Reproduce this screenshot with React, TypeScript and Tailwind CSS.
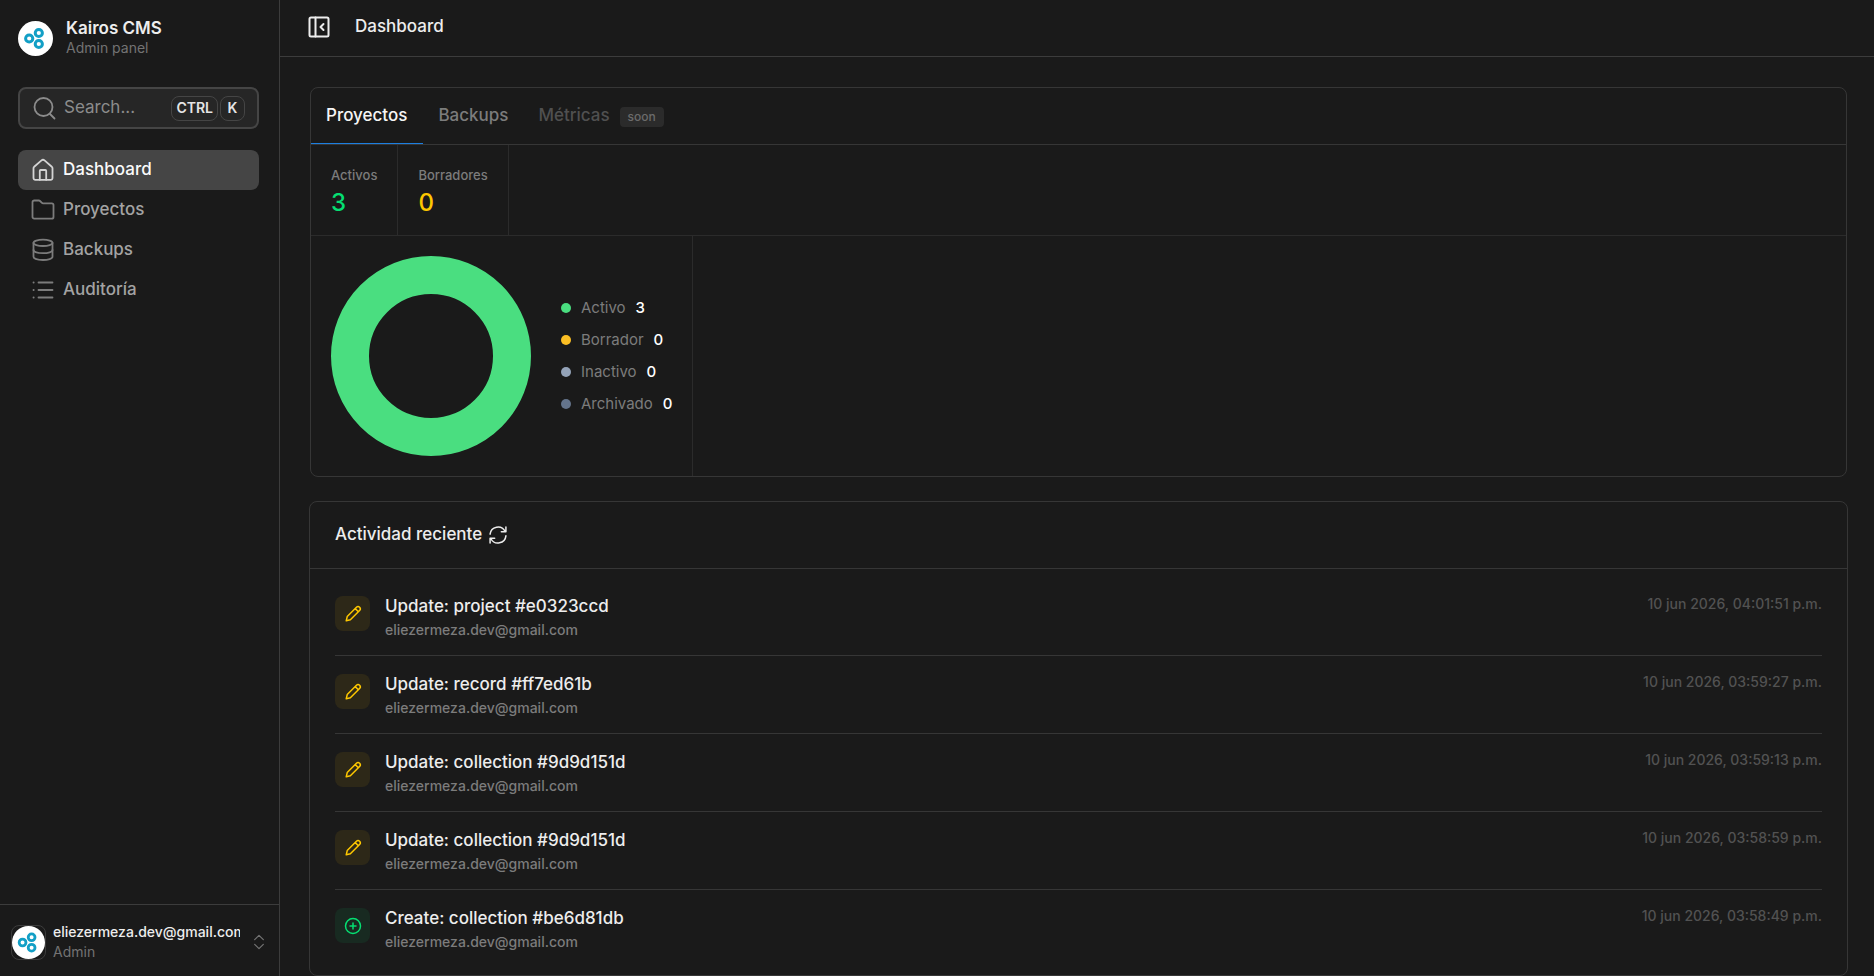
import type { ReactNode } from 'react'
import clsx from 'clsx'

type Activity = {
  kind: 'update' | 'create'
  title: string
  user: string
  date: string
}

const USER = 'eliezermeza.dev@gmail.com'

const activities: Activity[] = [
  { kind: 'update', title: 'Update: project #e0323ccd', user: USER, date: '10 jun 2026, 04:01:51 p.m.' },
  { kind: 'update', title: 'Update: record #ff7ed61b', user: USER, date: '10 jun 2026, 03:59:27 p.m.' },
  { kind: 'update', title: 'Update: collection #9d9d151d', user: USER, date: '10 jun 2026, 03:59:13 p.m.' },
  { kind: 'update', title: 'Update: collection #9d9d151d', user: USER, date: '10 jun 2026, 03:58:59 p.m.' },
  { kind: 'create', title: 'Create: collection #be6d81db', user: USER, date: '10 jun 2026, 03:58:49 p.m.' },
]

const legend = [
  { label: 'Activo', count: 3, dot: 'bg-[#4ade80]' },
  { label: 'Borrador', count: 0, dot: 'bg-[#fbbf24]' },
  { label: 'Inactivo', count: 0, dot: 'bg-[#94a3b8]' },
  { label: 'Archivado', count: 0, dot: 'bg-[#64748b]' },
]

function Icon({ size = 24, stroke = 1.8, children }: { size?: number; stroke?: number; children: ReactNode }) {
  return (
    <svg
      width={size}
      height={size}
      viewBox="0 0 24 24"
      fill="none"
      stroke="currentColor"
      strokeWidth={stroke}
      strokeLinecap="round"
      strokeLinejoin="round"
      className="shrink-0"
      aria-hidden="true"
    >
      {children}
    </svg>
  )
}

const HomeIcon = () => (
  <Icon>
    <path d="M2.500 10.200c0-.6.2-1.100.7-1.500l7.300-6.300a2.300 2.300 0 0 1 3 0l7.300 6.300c.5.4.7.9.7 1.500v9.800a1.800 1.800 0 0 1-1.800 1.800H4.300a1.800 1.800 0 0 1-1.800-1.800z" />
    <path d="M8.800 21.800v-9a.8.8 0 0 1 .8-.8h4.800a.8.8 0 0 1 .8.8v9" />
  </Icon>
)

const FolderIcon = () => (
  <Icon>
    <path d="M1.500 4.200a1.700 1.700 0 0 1 1.700-1.700h4.600c.5 0 .9.200 1.200.5l1.700 1.700c.4.400.9.600 1.400.600h8.700a1.700 1.700 0 0 1 1.700 1.700v12a1.700 1.700 0 0 1-1.700 1.700H3.200a1.700 1.700 0 0 1-1.700-1.700z" />
  </Icon>
)

const DatabaseIcon = () => (
  <Icon>
    <ellipse cx="12" cy="4.800" rx="9.500" ry="3.200" />
    <path d="M2.500 4.800v14c0 1.800 4.300 3.200 9.500 3.200s9.500-1.400 9.500-3.200v-14" />
    <path d="M2.500 12c0 1.800 4.300 3.200 9.500 3.200s9.500-1.400 9.500-3.200" />
  </Icon>
)

const ListIcon = () => (
  <Icon>
    <path d="M7.500 4.500h14M7.500 12h14M7.500 19.500h14M2.500 4.500h.2M2.500 12h.2M2.500 19.500h.2" />
  </Icon>
)

const nav = [
  { label: 'Dashboard', icon: <HomeIcon />, active: true },
  { label: 'Proyectos', icon: <FolderIcon />, active: false },
  { label: 'Backups', icon: <DatabaseIcon />, active: false },
  { label: 'Auditoría', icon: <ListIcon />, active: false },
]

function Logo({ size }: { size: number }) {
  return (
    <svg width={size} height={size} viewBox="0 0 35 35" className="shrink-0" aria-hidden="true">
      <circle cx="17.500" cy="17.500" r="17.500" fill="#fff" />
      <g fill="none" stroke="#129fc6" strokeWidth="3">
        <circle cx="11.200" cy="17.500" r="3.600" />
        <circle cx="20.800" cy="12" r="3.600" />
        <circle cx="20.800" cy="23" r="3.600" />
      </g>
    </svg>
  )
}

function Sidebar() {
  return (
    <aside className="flex w-70 shrink-0 flex-col border-r border-[#3c3c3c]">
      <div className="flex items-center gap-[13px] px-4.5 pt-4.5">
        <Logo size={35} />
        <div>
          <p className="text-[17px] leading-5 font-semibold text-[#ededed]">Kairos CMS</p>
          <p className="text-sm leading-5 text-[#737373]">Admin panel</p>
        </div>
      </div>

      <label className="mr-5 ml-4.5 mt-[29px] flex h-[42px] items-center gap-2 rounded-lg border-2 border-[#454545] bg-[#262626] px-3 text-[#8c8c8c]">
        <Icon>
          <circle cx="11.500" cy="11" r="9" />
          <path d="m18 18 4.500 4.500" />
        </Icon>
        <input
          type="search"
          aria-label="Search"
          placeholder="Search..."
          className="w-full min-w-0 bg-transparent text-[17px] outline-none placeholder:text-[#8c8c8c]"
        />
        <span className="flex gap-0.5 text-sm font-semibold text-[#e5e5e5]">
          <kbd className="flex h-[25px] items-center rounded-lg border border-[#454545] px-1 font-[Inter,sans-serif]">CTRL</kbd>
          <kbd className="flex h-[25px] w-[25px] items-center justify-center rounded-lg border border-[#454545] font-[Inter,sans-serif]">
            K
          </kbd>
        </span>
      </label>

      <nav className="mt-[21px] mr-5 ml-4.5 flex flex-col">
        {nav.map(item => (
          <a
            key={item.label}
            href="#"
            className={clsx(
              'flex h-10 items-center gap-2 rounded-lg px-[13px] text-[17px] font-medium',
              item.active ? 'bg-[#454545] text-[#fafafa]' : 'text-[#a3a3a3]',
            )}
          >
            <span className={item.active ? 'text-[#d4d4d4]' : 'text-[#7c7c7c]'}>{item.icon}</span>
            {item.label}
          </a>
        ))}
      </nav>

      <button
        type="button"
        className="mt-auto flex items-center gap-[7px] border-t border-[#3c3c3c] px-[11px] pt-[17px] pb-3.5 text-left"
      >
        <span className="flex size-[35px] shrink-0 items-center justify-center rounded-lg border border-[#3c3c3c]">
          <Logo size={33} />
        </span>
        <span className="w-[187px] overflow-hidden whitespace-nowrap">
          <span className="block text-sm leading-5 font-medium text-[#ededed]">{USER}</span>
          <span className="block text-sm leading-5 text-[#737373]">Admin</span>
        </span>
        <span className="ml-1 text-[#737373]">
          <Icon size={16}>
            <path d="m5.500 8.500 6.500-6.500 6.500 6.500M5.500 15.500l6.500 6.500 6.500-6.500" />
          </Icon>
        </span>
      </button>
    </aside>
  )
}

function Stat({ label, value, color }: { label: string; value: number; color: string }) {
  return (
    <div className="border-r border-[#2b2b2b] px-5 pt-5 pb-4">
      <p className="text-[13px] leading-5 font-medium text-[#7c7c7c]">{label}</p>
      <p className={clsx('mt-0.5 text-2xl leading-8 font-medium', color)}>{value}</p>
    </div>
  )
}

function ProjectsCard() {
  return (
    <section className="overflow-hidden rounded-lg border border-[#363636]">
      <div role="tablist" className="flex border-b border-[#363636] text-[17px] font-medium">
        <button
          type="button"
          role="tab"
          aria-selected="true"
          className="h-14 border-b border-[#1d7fe0] pr-4 pl-[15px] text-[#f5f5f5]"
        >
          Proyectos
        </button>
        <button type="button" role="tab" aria-selected="false" className="h-14 px-[15px] text-[#7c7c7c]">
          Backups
        </button>
        <button
          type="button"
          role="tab"
          aria-selected="false"
          disabled
          className="flex h-14 items-center gap-2.5 px-[15px] text-[#505050]"
        >
          Métricas
          <span className="mt-0.5 rounded bg-[#2b2b2b] px-2 text-xs leading-5 text-[#6b6b6b]">soon</span>
        </button>
      </div>
      <div className="flex border-b border-[#2b2b2b]">
        <Stat label="Activos" value={3} color="text-[#05df72]" />
        <Stat label="Borradores" value={0} color="text-[#fdc700]" />
      </div>
      <div className="flex">
        <div className="flex items-center gap-[30px] border-r border-[#2b2b2b] p-5">
          <svg width="200" height="200" viewBox="0 0 200 200" role="img" aria-label="Proyectos">
            <circle cx="100" cy="100" r="81" fill="none" stroke="#4ade80" strokeWidth="38" />
          </svg>
          <ul className="flex flex-col gap-3 text-[15px] leading-5">
            {legend.map(item => (
              <li key={item.label} className="flex items-center gap-2.5">
                <span className={clsx('size-2.5 rounded-full', item.dot)} />
                <span className="text-[#7c7c7c]">{item.label}</span>
                <span className="font-medium text-white">{item.count}</span>
              </li>
            ))}
          </ul>
        </div>
      </div>
    </section>
  )
}

function ActivityRow({ item }: { item: Activity }) {
  const isUpdate = item.kind === 'update'
  return (
    <li className="flex h-[78px] items-start gap-[15px] border-t border-[#363636] pt-[18px] first:border-transparent">
      <span
        className={clsx(
          'flex size-[35px] shrink-0 items-center justify-center rounded-lg',
          isUpdate ? 'bg-[#2d2818] text-[#fdc700]' : 'bg-[#182a21] text-[#05df72]',
        )}
      >
        {isUpdate ? (
          <Icon size={18} stroke={2}>
            <path d="M3 21l1.300-5.600L16.600 3.100a2.900 2.900 0 0 1 4.200 4.200L8.500 19.700zM15 4.800l4.200 4.200" />
          </Icon>
        ) : (
          <Icon size={18} stroke={2}>
            <circle cx="12" cy="12" r="10" />
            <path d="M12 8v8M8 12h8" />
          </Icon>
        )}
      </span>
      <div className="-mt-0.5 flex-1">
        <p className="text-[17px] leading-6 font-medium text-[#ededed]">{item.title}</p>
        <p className="text-sm leading-6 font-medium text-[#7c7c7c]">{item.user}</p>
      </div>
      <time className="-mt-0.5 text-sm leading-5 font-medium text-[#525252]">{item.date}</time>
    </li>
  )
}

function ActivityCard() {
  return (
    <section className="rounded-lg border border-[#363636]">
      <header className="flex h-[67px] items-center gap-1.5 border-b border-[#363636] px-[25px] text-[#ededed]">
        <h2 className="text-[17px] font-medium">Actividad reciente</h2>
        <button type="button" aria-label="Actualizar">
          <Icon size={20}>
            <path d="M2.500 11A9.600 9.600 0 0 1 20.500 7.500M21.500 2.500v5.500H16M21.500 13a9.600 9.600 0 0 1-18 3.500M2.500 21.500V16H8" />
          </Icon>
        </button>
      </header>
      <ul className="px-[25px] pt-2 pb-2">
        {activities.map(item => (
          <ActivityRow key={item.title + item.date} item={item} />
        ))}
      </ul>
    </section>
  )
}

export default function App() {
  return (
    <div className="flex min-h-screen bg-[#1a1a1a] font-[Inter,sans-serif] text-[#ededed]">
      <Sidebar />
      <div className="flex min-w-0 flex-1 flex-col">
        <header className="flex h-[57px] shrink-0 items-center gap-6 border-b border-[#3c3c3c] px-[27px] pb-0.5">
          <button type="button" aria-label="Contraer menú">
            <Icon size={24} stroke={2}>
              <rect x="2.500" y="2.500" width="19" height="19" rx="1.500" />
              <path d="M8.500 2.500v19M16.500 9l-3 3 3 3" />
            </Icon>
          </button>
          <h1 className="text-[17px] font-medium">Dashboard</h1>
        </header>
        <main className="flex flex-1 flex-col gap-6 pt-[30px] pr-6.5 pl-[29px]">
          <div className="px-px">
            <ProjectsCard />
          </div>
          <ActivityCard />
        </main>
      </div>
    </div>
  )
}
